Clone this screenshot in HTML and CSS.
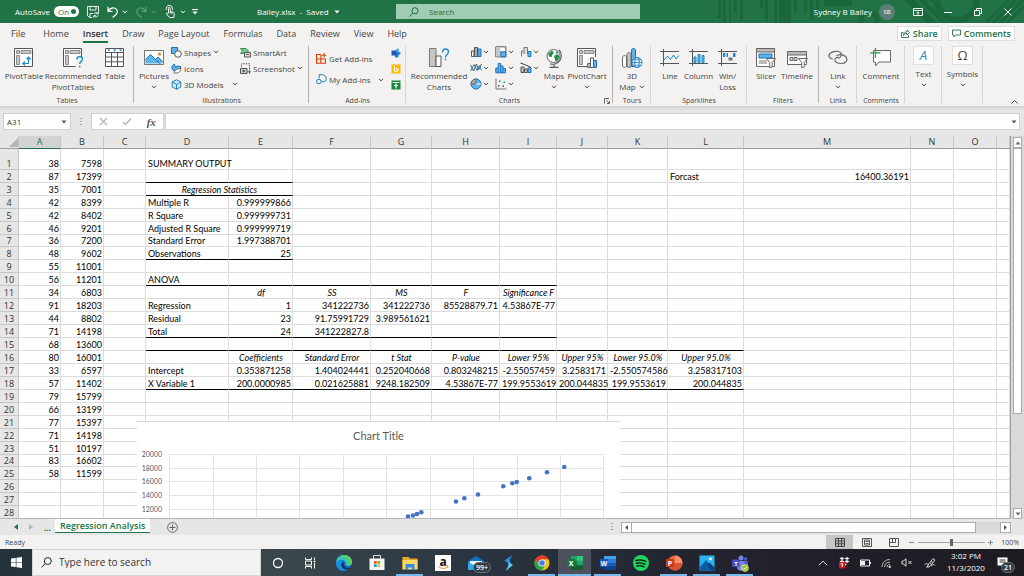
FILE: index.html
```html
<!DOCTYPE html>
<html lang="en">
<head>
<meta charset="utf-8">
<title>Bailey.xlsx - Excel</title>
<link rel="stylesheet" href="styles.css">
</head>
<body>
<svg class="defs" aria-hidden="true">
  <symbol id="chev" viewBox="0 0 6 4"><path d="M1 .8 3 2.9 5 .8" fill="none" stroke="currentColor"/></symbol>
  <symbol id="tri" viewBox="0 0 6 4"><path d="M.5.5h5L3 3.500z" fill="currentColor"/></symbol>
</svg>

<header class="titlebar">
  <svg class="pattern" viewBox="0 0 310 23" aria-hidden="true">
    <g fill="#1b663b">
      <path d="M4 0h3v18H4zM9 0h3v23H9zM15 0h2v23h-2zM20 0h3v13h-3zM26 0h3v21h-3zM46 0h3v8h-3zM51 0h3v21h-3zM60 0h3v23h-3zM65 0h12v23H65zM80 0h3v14h-3zM90 0h3v14h-3zM96 0h3v20h-3zM102 0h3v14h-3zM110 0h28v6h-28zM190 0h10l23 23h-10zM205 0h5l23 23h-5zM216 0h5l23 23h-5z"/>
    </g>
    <g fill="none" stroke="#1b663b"><circle cx="155" cy="20" r="8" stroke-width="5"/><circle cx="243" cy="0" r="20" stroke-width="6"/><path d="m272 23 23-23M279 23l23-23M286 23l23-23M293 23l17-17" stroke-width="3"/></g>
  </svg>
  <div class="quick">
    <label class="autosave">AutoSave <span class="toggle"><input type="checkbox" checked>On</span></label>
    <button aria-label="Save"><svg width="12" height="12" viewBox="0 0 12 12" fill="none" stroke="#fff"><path d="M.5.5h11v5M.5.5v9l2 2H5M3 .5v3.500h6v-3.500M3 11.500v-4h3M7 8a2.400 2.400 0 0 1 4-.5M11.500 5.500v2.200H9.300M11.300 9.300a2.400 2.400 0 0 1-4 .6M6.800 11.800V9.700H9" stroke-width=".9"/></svg></button>
    <button class="undo" aria-label="Undo"><svg width="11" height="12" viewBox="0 0 11 12" fill="none" stroke="#fff" stroke-width="1.200"><path d="M1 .8v4.500h4.500M1.200 5C3 2.500 5 1.800 7 2c4 .8 4 4.800 1.500 7L5.500 11.500"/></svg><svg class="chev"><use href="#chev"/></svg></button>
    <button class="redo" aria-label="Redo"><svg width="11" height="12" viewBox="0 0 11 12" fill="none" stroke="currentColor" stroke-width="1.200"><path d="M10 .8v4.500H5.500M9.800 5C8 2.500 6 1.800 4 2 0 2.800 0 6.800 2.500 9l3 2.500"/></svg><svg class="chev"><use href="#chev"/></svg></button>
    <button class="touch" aria-label="Touch mode"><svg width="10" height="13" viewBox="0 0 10 13" fill="none" stroke="#fff" stroke-width="1"><path d="M3.500 8V3.200a.8.800 0 0 1 1.700 0V6.500l3.300.8c.7.200.9.700.8 1.300L8.800 12.500H4.500L1.500 9c-.3-.8.5-1.200 1-.8zM1.500 5a3.200 3.200 0 1 1 5.800 0M5.200 8.500v-2M7 9V7"/></svg><svg class="chev"><use href="#chev"/></svg></button>
    <button aria-label="Customize toolbar"><svg width="6" height="6" viewBox="0 0 6 6"><path d="M0 .5h6" stroke="#fff"/><path d="M.5 2.500h5L3 5.500z" fill="#fff"/></svg></button>
  </div>
  <div class="doc">Bailey.xlsx&nbsp; - &nbsp;Saved <svg class="tri"><use href="#tri"/></svg></div>
  <label class="search"><svg width="10" height="10" viewBox="0 0 10 10" fill="none" stroke="#1d6a40" stroke-width="1"><circle cx="6" cy="3.800" r="3.100"/><path d="M3.800 6 .5 9.500"/></svg><input type="text" placeholder="Search" aria-label="Search"></label>
  <div class="account">
    <span>Sydney B Bailey</span><span class="avatar">SB</span>
    <button aria-label="Ribbon display options"><svg width="10" height="8" viewBox="0 0 10 8" fill="none" stroke="#fff"><path d="M.5.5h9v7h-9zM.5 2.500h9M5 7V4M3.500 5.300 5 3.800l1.500 1.500" stroke-width=".9"/></svg></button>
    <button aria-label="Minimize"><svg width="8" height="8" viewBox="0 0 8 8"><path d="M0 4.500h8" stroke="#fff"/></svg></button>
    <button aria-label="Restore"><svg width="8" height="8" viewBox="0 0 8 8" fill="none" stroke="#fff"><path d="M.5 2.500h5v5h-5zM2.500 2V.5h5v5H6"/></svg></button>
    <button aria-label="Close"><svg width="8" height="8" viewBox="0 0 8 8"><path d="m.5.5 7 7M7.500.5l-7 7" stroke="#fff"/></svg></button>
  </div>
</header>

<nav class="tabs">
  <button class="file">File</button><button>Home</button><button class="active">Insert</button><button>Draw</button><button>Page Layout</button><button>Formulas</button><button>Data</button><button>Review</button><button>View</button><button>Help</button>
  <div class="share">
    <button><svg width="9" height="9" viewBox="0 0 9 9" fill="none" stroke="#217346" stroke-width=".9"><path d="M2.500 3.500h-2v5h7V6M2.500 6.500c0-2.500 1.500-3.700 3.500-3.700V1l2.500 2.500L6 6V4.300c-1.500 0-2.700.7-3.500 2.200z"/></svg>Share</button>
    <button><svg width="9" height="9" viewBox="0 0 9 9" fill="none" stroke="#217346" stroke-width=".9"><path d="M.5 1h8v5H4L2 8V6H.5z"/></svg>Comments</button>
  </div>
</nav>

<section class="ribbon">
  <div class="group tables">
    <div class="tools">
      <button class="big"><svg width="20" height="20" viewBox="0 0 20 20"><path d="M.5.5h18v18H.5z" fill="#fff" stroke="#555"/><path d="M2.500 2.500h3v3h-3zM7 2.500h10v3H7zM2.500 7.500h3v9h-3z" fill="#c8c6c4" stroke="#777" stroke-width=".8"/><path d="M14.500 15.500v-6M12.500 11.500l2-2.300 2 2.300M15 15.500H9M11 13.500l-2.300 2 2.300 2" fill="none" stroke="#1e8bcd" stroke-width="1.200"/></svg>PivotTable</button>
      <button class="big"><svg width="20" height="20" viewBox="0 0 20 20"><path d="M.5.5h18v18H.5z" fill="#fff" stroke="#555"/><path d="M2.500 2.500h3v3h-3zM7 2.500h10v3H7zM2.500 7.500h3v9h-3z" fill="#c8c6c4" stroke="#777" stroke-width=".8"/><path d="M12.500 9h7.500v11h-7.500z" fill="#f3f2f1"/><path d="M14 11.500c0-4 5.500-3.800 5.500-.5 0 2.500-2.800 2.300-2.800 5M16.700 17.800v1.700" fill="none" stroke="#1e8bcd" stroke-width="1.400"/></svg>Recommended<br>PivotTables</button>
      <button class="big"><svg width="20" height="20" viewBox="0 0 20 20"><path d="M.5.5h18v18H.5z" fill="#fff"/><path d="M.5 4.500h18M.5 9h18M.5 13.800h18M6.500 4v15M12.500 4v15M.5.500h18v18H.5z" fill="none" stroke="#555"/><path d="M1 1h17v3H1z" fill="#fff"/><path d="M2 1.500h3.500L3.700 3.500zM8 1.500h3.500L9.700 3.500zM14 1.500h3.500l-1.800 2z" fill="#1e8bcd"/></svg>Table</button>
    </div>
    <h2>Tables</h2>
  </div>
  <div class="group illus dark">
    <div class="tools">
      <button class="big"><svg width="20" height="20" viewBox="0 0 20 20"><path d="M.5 2.500h19v14H.5z" fill="#fff" stroke="#777"/><path d="M1.500 15.500v-4l5-5 5 5 2.500-2.500 4.500 4.500v2z" fill="#5db3ea"/><path d="m1.500 11.500 5-5 5 5 2.500-2.500 4.500 4.500M10.500 10.500l5 5" fill="none" stroke="#1b70b8"/><circle cx="15.500" cy="6" r="1.600" fill="#e8862a"/></svg>Pictures<svg class="chev"><use href="#chev"/></svg></button>
      <div class="stack">
        <button><svg width="11" height="11" viewBox="0 0 11 11"><path d="M.5.500h6v6h-6z" fill="#5db3ea" stroke="#1b70b8"/><circle cx="7" cy="7" r="3.300" fill="#fff" stroke="#555"/></svg>Shapes<svg class="chev"><use href="#chev"/></svg></button>
        <button><svg width="11" height="11" viewBox="0 0 11 11"><path d="M1 3.500 3 1l1.500 3L7 3l3 1-1.500 3-2 1.500L3 8 1 6z" fill="#5db3ea" stroke="#1b70b8"/><path d="M3 10.500c0-4 4-5 7-5-.2 3-2.500 5-6 4.500" fill="#fff" stroke="#555" stroke-width=".9"/></svg>Icons</button>
        <button><svg width="11" height="11" viewBox="0 0 11 11" fill="#cfe8f8" stroke="#1b80c4"><path d="m5.500.800 4.300 2.200v5L5.500 10.300 1.200 8V3zM1.200 3l4.300 2.300L9.800 3M5.500 5.300v5"/></svg>3D Models<svg class="chev far"><use href="#chev"/></svg></button>
      </div>
      <div class="stack">
        <button><svg width="11" height="11" viewBox="0 0 11 11"><path d="M.5 1.500h5.500L8.500 4 6 6.500H.5L2.500 4z" fill="#79c795" stroke="#27924a"/><path d="M4.500 5.500h6v4.500h-6z" fill="#ddd" stroke="#555"/><path d="M6 7.500h3" stroke="#555"/></svg>SmartArt</button>
        <button><svg width="11" height="11" viewBox="0 0 11 11" fill="none"><path d="M1.500 4V.800h8V6" stroke="#555" stroke-dasharray="1.500 1"/><path d="M.5 5.500h6.500v5H.5z" fill="#ccc" stroke="#555"/><circle cx="3.700" cy="8" r="1.200" fill="#555"/><path d="M9.500 6.500v4.500M7.300 8.800h3.700" stroke="#27924a"/></svg>Screenshot<svg class="chev"><use href="#chev"/></svg></button>
      </div>
    </div>
    <h2>Illustrations</h2>
  </div>
  <div class="group addins">
    <div class="tools">
      <div class="stack roomy">
        <button><svg width="11" height="11" viewBox="0 0 11 11" fill="none" stroke="#d83b01" stroke-width="1.100"><path d="M4.800 1.500H.6v8.800h8.800V6H.6M4.900 1.500v8.800M8 0v4.500M5.800 2.300h4.500"/></svg>Get Add-ins</button>
        <button><svg width="11" height="11" viewBox="0 0 11 11" fill="none" stroke="#1b80c4"><path d="M3.200 4.200V.8L6.500.5l3.500 2v4L7.500 8 5.200 7"/><circle cx="2.800" cy="7.500" r="2.300"/></svg>My Add-ins<svg class="chev far"><use href="#chev"/></svg></button>
      </div>
      <div class="stack minis">
        <button aria-label="Visio"><svg width="10" height="10" viewBox="0 0 10 10"><circle cx="6.500" cy="2" r="1.500" fill="#41a5ee"/><path d="M4 6h3.500v3.500H4z" fill="#2b7cd3"/><path d="M5 3.500h2.500L10 5 7.500 7.500 5 7z" fill="#2b7cd3"/><path d="M.5 2.500h5v5h-5z" fill="#185abd"/></svg></button>
        <button aria-label="Bing"><svg width="10" height="10" viewBox="0 0 10 10"><path d="M.5.500h9v9h-9z" fill="#ffb900"/><path d="M3.500 2v5l1.500.8 2-1.300v-1L4.800 4.300" fill="none" stroke="#fff" stroke-width="1.200"/></svg></button>
        <button aria-label="People graph"><svg width="10" height="10" viewBox="0 0 10 10"><path d="M.5.500h9v9h-9z" fill="#10893e"/><path d="M1.500 2.500h7M5 3.500v5M3 5.500h4" stroke="#fff" stroke-width="1.200"/></svg></button>
      </div>
    </div>
    <h2>Add-ins</h2>
  </div>
  <div class="group charts dark">
    <div class="tools">
      <button class="big"><svg width="20" height="20" viewBox="0 0 20 20"><path d="M.5.500H7v18H.5z" fill="#c8c6c4" stroke="#777"/><path d="M7 8h5v10.500H7z" fill="#fff" stroke="#555"/><path d="M13.500 4.500c0-4.500 6-4.500 6-.8 0 2.800-3 2.800-3 5.800M16.500 10.500v1.800" fill="none" stroke="#1e8bcd" stroke-width="1.400"/></svg>Recommended<br>Charts</button>
      <div class="minigrid">
        <button aria-label="Column chart"><svg width="12" height="12" viewBox="0 0 12 12"><path d="M1.500 5h2.500v5.500H1.500z" fill="#fff" stroke="#555"/><path d="M4.500 1.500h3v9h-3z" fill="#aaa" stroke="#555"/><path d="M8 3h3v7.500H8z" fill="#5db3ea" stroke="#1b70b8"/></svg><svg class="chev"><use href="#chev"/></svg></button>
        <button aria-label="Hierarchy chart"><svg width="12" height="12" viewBox="0 0 12 12"><path d="M.8.800h10v10h-10z" fill="#fff" stroke="#555"/><path d="M1 1h4.500v9.500H1z" fill="#c8c6c4"/><path d="M5.800 5.800h5v5h-5z" fill="#5db3ea" stroke="#1b70b8"/></svg><svg class="chev"><use href="#chev"/></svg></button>
        <button aria-label="Waterfall chart"><svg width="12" height="12" viewBox="0 0 12 12"><path d="M1.500 10.500V5h2M4 8V1.500h3.500V8" fill="#ddd" stroke="#777"/><path d="M8 5.500h3v5H8z" fill="#5db3ea" stroke="#1b80c4"/></svg><svg class="chev"><use href="#chev"/></svg></button>
        <button aria-label="Line chart"><svg width="12" height="12" viewBox="0 0 12 12" fill="none"><path d="m.5 3 3 6 3-7 2 6 3-6" stroke="#555"/><path d="m.5 9 3.500-6.500L7 8.500l2.500-5 2 5" stroke="#1b80c4"/></svg><svg class="chev"><use href="#chev"/></svg></button>
        <button aria-label="Statistic chart"><svg width="12" height="12" viewBox="0 0 12 12"><path d="M.8 10.800V6h2.400V1.500h2.500V4H8v2.500h2.500v4.300z" fill="#5db3ea" stroke="#1b70b8"/><path d="M3.200 6v5M5.700 4v7M8 6.500V11" stroke="#1b70b8" stroke-width=".8"/></svg><svg class="chev"><use href="#chev"/></svg></button>
        <button aria-label="Combo chart"><svg width="12" height="12" viewBox="0 0 12 12"><path d="M1 5h3v5.500H1zM4.500 7h3v3.500h-3z" fill="#bbb" stroke="#555"/><path d="M8 6h3v4.500H8z" fill="#5db3ea" stroke="#1b70b8"/><path d="m.5 1 4 1.500L11 5.500" fill="none" stroke="#333"/></svg><svg class="chev"><use href="#chev"/></svg></button>
        <button aria-label="Pie chart"><svg width="12" height="12" viewBox="0 0 12 12"><circle cx="6" cy="6" r="5" fill="#5db3ea" stroke="#1b70b8"/><path d="M6 6V1a5 5 0 0 0-5 5z" fill="#aaa" stroke="#666"/><path d="M6 6h5" stroke="#fff"/></svg><svg class="chev"><use href="#chev"/></svg></button>
        <button aria-label="Scatter chart"><svg width="12" height="12" viewBox="0 0 12 12"><path d="M1 .5v10.500h10.500" fill="none" stroke="#777"/><path d="M3 7h1.500v1.500H3zM7.500 7.500H9V9H7.500z" fill="#555"/><path d="M4 2.500h1.500V4H4zM8.500 3.500H10V5H8.500z" fill="#1b80c4"/></svg><svg class="chev"><use href="#chev"/></svg></button>
      </div>
      <button class="big"><svg width="18" height="20" viewBox="0 0 18 20"><circle cx="8.500" cy="8" r="6.500" fill="#fff" stroke="#666"/><path d="M3 5.500 7 2.500l2 2L7 7v2L4 8.500zM9 8l3.500-2 2 2.500-1.500 3.500-2.500 1.500zM11 3.500l2 .5v1.500h-2z" fill="#2c8c4d"/><path d="M14 2a8.500 8.500 0 0 1-9 13.800M9 17v2M4.500 19.300h9" fill="none" stroke="#555" stroke-width="1.200"/></svg>Maps<svg class="chev"><use href="#chev"/></svg></button>
      <button class="big"><svg width="20" height="20" viewBox="0 0 20 20"><path d="M.5.500h18v18H.5z" fill="#fff" stroke="#555"/><path d="M2.500 2.500h3v3h-3zM7 2.500h10v3H7zM2.500 7.500h3v9h-3z" fill="#c8c6c4" stroke="#777" stroke-width=".8"/><path d="M10 9h10v11H10z" fill="#f3f2f1"/><path d="M10.500 15.500h3v4h-3z" fill="#bbb" stroke="#666"/><path d="M13.500 10h3v9.500h-3z" fill="#fff" stroke="#555"/><path d="M16.500 12.500h3v7h-3z" fill="#5db3ea" stroke="#1b70b8"/></svg>PivotChart<svg class="chev"><use href="#chev"/></svg></button>
    </div>
    <h2>Charts</h2>
    <button class="launcher" aria-label="See all charts"><svg width="6" height="6" viewBox="0 0 6 6" fill="none" stroke="#666"><path d="M.5 5.500v-5H5M2.500 2.500l3 3M5.500 3v2.500H3"/></svg></button>
  </div>
  <div class="group one">
    <div class="tools"><button class="big"><svg width="22" height="20" viewBox="0 0 22 20"><path d="M1.500 9.500c0-2.500 4-2.500 4 0v9c-1 1-3 1-4 0z" fill="#fff" stroke="#666"/><path d="M6 6.500c0-2.500 4-2.500 4 0v12c-1 1-3 1-4 0z" fill="#c8c6c4" stroke="#666"/><path d="M10.500 2c0-2 4-2 4 0v16.500h-4z" fill="#5db3ea" stroke="#1b70b8"/><circle cx="16" cy="14.500" r="5" fill="#fff" stroke="#1b80c4"/><ellipse cx="16" cy="14.500" rx="2.200" ry="5" fill="none" stroke="#1b80c4"/><path d="M11 14.500h10M12 11.800h8M12 17.200h8" stroke="#1b80c4" stroke-width=".8"/></svg>3D<br><span>Map <svg class="chev"><use href="#chev"/></svg></span></button></div>
    <h2>Tours</h2>
  </div>
  <div class="group spark">
    <div class="tools">
      <button class="big"><svg width="20" height="20" viewBox="0 0 20 20" fill="none"><path d="M0 3.500h19M0 15.500h19M3.500 1v17" stroke="#555"/><path d="m4 12 3.500-4 3 3.500 3-4.500 2.500 4 3-3.500" stroke="#1e8bcd"/></svg>Line</button>
      <button class="big"><svg width="20" height="20" viewBox="0 0 20 20" fill="none"><path d="M0 3.500h19M0 15.500h19M3.500 1v17" stroke="#555"/><path d="M5 9h2v5.500H5zM9 6.500h2v8H9zM13 7.500h2v7h-2z" fill="#5db3ea" stroke="#1e8bcd"/></svg>Column</button>
      <button class="big"><svg width="20" height="20" viewBox="0 0 20 20" fill="none"><path d="M0 3.500h19M0 15.500h19M3.500 1v17" stroke="#555"/><path d="M5 5h2.200v4H5zM8.500 5h1.500v4H8.500zM15 5h2.500v4H15z" fill="#1e8bcd"/><path d="M10.500 9.500h4v3h-4z" fill="#777"/></svg>Win/<br>Loss</button>
    </div>
    <h2>Sparklines</h2>
  </div>
  <div class="group filters dark">
    <div class="tools">
      <button class="big"><svg width="20" height="20" viewBox="0 0 20 20"><path d="M.5.500h18v18H.5z" fill="#fff" stroke="#666"/><path d="M.5.500h18V4H.5z" fill="#bbb" stroke="#666"/><path d="M3 6h13v4H3z" fill="#5db3ea" stroke="#1b70b8"/><path d="M3 12h8v4H3z" fill="#bbb"/><path d="M10.500 10.500h9l-3.300 4V19l-2.500 1v-5.500z" fill="#fff" stroke="#666"/></svg>Slicer</button>
      <button class="big"><svg width="21" height="20" viewBox="0 0 21 20"><path d="M.5 3.500h19v13H.5z" fill="#fff" stroke="#666"/><path d="M.5 3.500h19V7H.5z" fill="#bbb" stroke="#666"/><path d="M3 9.500h3v3H3zM7 9.500h3v3H7z" fill="#ddd" stroke="#666"/><path d="M11.500 10.500h9l-3.300 4V19l-2.500 1v-5.500z" fill="#fff" stroke="#666"/></svg>Timeline</button>
    </div>
    <h2>Filters</h2>
  </div>
  <div class="group one">
    <div class="tools"><button class="big"><svg width="20" height="20" viewBox="0 0 20 20" fill="none" stroke="#666" stroke-width="1.200"><path d="M5 11C1 11 0 7.500 2 5.500c2-2.500 8-3 10.500-1 2 2 .5 5-2.500 6M8.500 8c2-2 7-2 9.500 1 2.500 4-1 6.500-5 6.500-3.500 0-6.500-1.500-6-4 .3-1.700 2-2.500 3.500-2"/></svg>Link<svg class="chev"><use href="#chev"/></svg></button></div>
    <h2>Links</h2>
  </div>
  <div class="group one">
    <div class="tools"><button class="big"><svg width="22" height="20" viewBox="0 0 22 20"><path d="M3.500 2.500h17v11.500H9L5.500 18v-4h-2z" fill="#fff" stroke="#666"/><path d="M5.500 0v10M0 4.800h10.500" stroke="#27a04f" stroke-width="1.200"/></svg>Comment</button></div>
    <h2>Comments</h2>
  </div>
  <div class="group one">
    <div class="tools"><button class="big"><span class="tile textart">A</span>Text<svg class="chev"><use href="#chev"/></svg></button></div>
  </div>
  <div class="group one">
    <div class="tools"><button class="big"><span class="tile">Ω</span>Symbols<svg class="chev"><use href="#chev"/></svg></button></div>
  </div>
  <div class="collapse"><button aria-label="Collapse the ribbon"><svg width="7" height="4" viewBox="0 0 7 4"><path d="m.5 3.500 3-3 3 3" fill="none" stroke="#444"/></svg></button></div>
</section>

<section class="formulabar">
  <label class="namebox"><input type="text" value="A31" aria-label="Name box"><svg class="tri"><use href="#tri"/></svg></label>
  <span class="grip"></span>
  <div class="fxbox">
    <button aria-label="Cancel"><svg width="9" height="9" viewBox="0 0 9 9"><path d="m1 1 7 7M8 1 1 8" stroke="#b5b5b5" stroke-width="1.200"/></svg></button>
    <button aria-label="Enter"><svg width="10" height="9" viewBox="0 0 10 9"><path d="m1 5 2.500 2.500L9 1.500" fill="none" stroke="#b5b5b5" stroke-width="1.500"/></svg></button>
    <button class="fx" aria-label="Insert function">fx</button>
  </div>
  <label class="formula"><input type="text" aria-label="Formula"><svg class="tri"><use href="#tri"/></svg></label>
</section>

<main class="workspace">
  <div class="sheet">
    <table class="grid">
      <colgroup><col class="w-head"><col class="w-n"><col class="w-b"><col class="w-n"><col class="w-d"><col class="w-e"><col class="w-f"><col class="w-g"><col class="w-h"><col class="w-i"><col class="w-j"><col class="w-k"><col class="w-l"><col><col class="w-b"><col class="w-b"><col class="w-p"></colgroup>
      <thead><tr><th class="corner"><svg width="9" height="9" viewBox="0 0 9 9"><path d="M9 0v9H0z" fill="#b4b4b4"/></svg><th class="sel">A<th>B<th>C<th>D<th>E<th>F<th>G<th>H<th>I<th>J<th>K<th>L<th>M<th>N<th>O<th></tr></thead>
      <tbody>
      <tr class="tall"><th>1<td>38<td>7598<td><td class="t">SUMMARY OUTPUT
        <td><td><td><td><td><td> <td><td><td><td><td><td></tr>
      <tr class="rule-e"><th>2<td>87<td>17399<td><td><td>
        <td><td><td><td><td><td> <td class="t">Forcast<td>16400.36191<td><td><td></tr>
      <tr><th>3<td>35<td>7001<td><td class="h ruled" colspan="2">Regression Statistics
        <td><td><td><td><td> <td><td><td><td><td><td></tr>
      <tr><th>4<td>42<td>8399<td><td class="t">Multiple R<td>0.999999866
        <td><td><td><td><td> <td><td><td><td><td><td></tr>
      <tr><th>5<td>42<td>8402<td><td class="t">R Square<td>0.999999731
        <td><td><td><td><td> <td><td><td><td><td><td></tr>
      <tr><th>6<td>46<td>9201<td><td class="t">Adjusted R Square<td>0.999999719
        <td><td><td><td><td> <td><td><td><td><td><td></tr>
      <tr class="short"><th>7<td>36<td>7200<td><td class="t">Standard Error<td>1.997388701
        <td><td><td><td><td> <td><td><td><td><td><td></tr>
      <tr class="rule-e"><th>8<td>48<td>9602<td><td class="t">Observations<td>25
        <td><td><td><td><td> <td><td><td><td><td><td></tr>
      <tr><th>9<td>55<td>11001<td><td>
        <td><td><td><td><td><td> <td><td><td><td><td><td></tr>
      <tr class="rule-i"><th>10<td>56<td>11201<td><td class="t">ANOVA
        <td><td><td><td><td><td> <td><td><td><td><td><td></tr>
      <tr><th>11<td>34<td>6803<td><td><td class="h">df<td class="h">SS<td class="h">MS<td class="h">F<td class="h">Significance F
        <td><td><td><td><td><td><td></tr>
      <tr><th>12<td>91<td>18203<td><td class="t">Regression<td>1<td>341222736<td>341222736<td>85528879.71<td>4.53867E-77
        <td><td><td><td><td><td><td></tr>
      <tr><th>13<td>44<td>8802<td><td class="t">Residual<td>23<td>91.75991729<td>3.989561621<td><td>
        <td><td><td><td><td><td><td></tr>
      <tr class="rule-i"><th>14<td>71<td>14198<td><td class="t">Total<td>24<td>341222827.8<td><td><td>
        <td><td><td><td><td><td><td></tr>
      <tr class="rule-l"><th>15<td>68<td>13600<td><td>
        <td><td><td><td><td><td> <td><td><td><td><td><td></tr>
      <tr><th>16<td>80<td>16001<td><td><td class="h">Coefficients<td class="h">Standard Error<td class="h">t Stat<td class="h">P-value<td class="h">Lower 95%<td class="h">Upper 95%<td class="h">Lower 95.0%<td class="h">Upper 95.0%
        <td><td><td><td></tr>
      <tr><th>17<td>33<td>6597<td><td class="t">Intercept<td>0.353871258<td>1.404024441<td>0.252040668<td>0.803248215<td>-2.55057459<td>3.2583171<td>-2.550574586<td>3.258317103
        <td><td><td><td></tr>
      <tr class="rule-l"><th>18<td>57<td>11402<td><td class="t">X Variable 1<td>200.0000985<td>0.021625881<td>9248.182509<td>4.53867E-77<td>199.9553619<td>200.044835<td>199.9553619<td>200.044835
        <td><td><td><td></tr>
      <tr><th>19<td>79<td>15799<td><td>
        <td><td><td><td><td><td> <td><td><td><td><td><td></tr>
      <tr><th>20<td>66<td>13199<td><td>
        <td><td><td><td><td><td> <td><td><td><td><td><td></tr>
      <tr><th>21<td>77<td>15397<td><td>
        <td><td><td><td><td><td> <td><td><td><td><td><td></tr>
      <tr><th>22<td>71<td>14198<td><td>
        <td><td><td><td><td><td> <td><td><td><td><td><td></tr>
      <tr><th>23<td>51<td>10197<td><td>
        <td><td><td><td><td><td> <td><td><td><td><td><td></tr>
      <tr class="short"><th>24<td>83<td>16602<td><td>
        <td><td><td><td><td><td> <td><td><td><td><td><td></tr>
      <tr><th>25<td>58<td>11599<td><td>
        <td><td><td><td><td><td> <td><td><td><td><td><td></tr>
      <tr><th>26<td><td><td><td>
        <td><td><td><td><td><td> <td><td><td><td><td><td></tr>
      <tr><th>27<td><td><td><td>
        <td><td><td><td><td><td> <td><td><td><td><td><td></tr>
      <tr><th>28<td><td><td><td>
        <td><td><td><td><td><td> <td><td><td><td><td><td></tr>
      </tbody>
    </table>
    <figure class="chart">
      <figcaption>Chart Title</figcaption>
      <svg width="483" height="68" viewBox="0 0 483 68">
        <path d="M32 4.500h435M32 18.500h435M32 31.500h435M32 45.500h435M32 59.500h435M32.500 4v64M76.500 4v64M119.500 4v64M162.500 4v64M206.500 4v64M249.500 4v64M293.500 4v64M336.500 4v64M380.500 4v64M423.500 4v64M466.500 4v64" stroke="#e4e4e4"/>
        <g class="axis"><text x="25" y="7">20000</text><text x="25" y="21">18000</text><text x="25" y="34">16000</text><text x="25" y="48">14000</text><text x="25" y="62">12000</text></g>
        <g fill="#4472c4"><circle cx="271" cy="66.500" r="2.300"/><circle cx="276" cy="65.500" r="2.300"/><circle cx="280" cy="64" r="2.300"/><circle cx="284.300" cy="62.300" r="2.300"/><circle cx="319" cy="51.500" r="2.300"/><circle cx="327.300" cy="48.300" r="2.300"/><circle cx="341" cy="44.500" r="2.300"/><circle cx="366.300" cy="36.300" r="2.300"/><circle cx="375.300" cy="33.300" r="2.300"/><circle cx="379.700" cy="32" r="2.300"/><circle cx="392.300" cy="28.300" r="2.300"/><circle cx="410" cy="22.300" r="2.300"/><circle cx="427.300" cy="17" r="2.300"/></g>
      </svg>
    </figure>
  </div>
  <div class="vscroll">
    <button aria-label="Scroll up"><svg class="tri up"><use href="#tri"/></svg></button>
    <div class="thumb"></div>
    <button class="down" aria-label="Scroll down"><svg class="tri"><use href="#tri"/></svg></button>
  </div>
</main>

<div class="sheetbar">
  <div class="sheetnav"><button aria-label="Previous sheet"><svg width="4" height="6" viewBox="0 0 4 6"><path d="M4 0v6L0 3z" fill="#217346"/></svg></button><button aria-label="Next sheet"><svg width="4" height="6" viewBox="0 0 4 6"><path d="M0 0v6l4-3z" fill="#b5b5b5"/></svg></button><button class="more">...</button></div>
  <button class="sheettab">Regression Analysis</button>
  <button class="add" aria-label="New sheet"><svg width="11" height="11" viewBox="0 0 11 11" fill="none" stroke="#666"><circle cx="5.500" cy="5.500" r="4.900"/><path d="M5.500 2.500v6M2.500 5.500h6"/></svg></button>
  <span class="grip"></span>
  <div class="hscroll">
    <button aria-label="Scroll left"><svg width="3" height="5" viewBox="0 0 3 5"><path d="M3 0v5L0 2.500z" fill="#555"/></svg></button>
    <div class="thumb"></div>
    <button class="right" aria-label="Scroll right"><svg width="3" height="5" viewBox="0 0 3 5"><path d="M0 0v5l3-2.500z" fill="#555"/></svg></button>
  </div>
</div>

<div class="status">
  <span class="ready">Ready</span>
  <button class="view on" aria-label="Normal view"><svg width="10" height="9" viewBox="0 0 10 9" fill="none" stroke="#444"><path d="M.5.500h9v8h-9zM.5 3h9M.5 5.800h9M3.500.500v8M6.500.500v8"/></svg></button>
  <button class="view" aria-label="Page layout view"><svg width="10" height="9" viewBox="0 0 10 9" fill="none" stroke="#555"><path d="M.5.500h9v8h-9zM2.500 2h5v5h-5zM3.500 3.500h3M3.500 5.500h3"/></svg></button>
  <button class="view" aria-label="Page break view"><svg width="10" height="9" viewBox="0 0 10 9" fill="none" stroke="#555"><path d="M.5.500h9v8h-9zM.5 4.500h6v-4M3.500.500v4"/></svg></button>
  <button class="zoombtn" aria-label="Zoom out"><svg width="5" height="5" viewBox="0 0 5 5"><path d="M0 2.500h5" stroke="#888"/></svg></button>
  <input class="zoom" type="range" min="0" max="100" value="50" aria-label="Zoom">
  <button class="zoombtn" aria-label="Zoom in"><svg width="5" height="5" viewBox="0 0 5 5"><path d="M0 2.500h5M2.500 0v5" stroke="#888"/></svg></button>
  <span class="percent">100%</span>
</div>

<footer class="taskbar">
  <button class="start" aria-label="Start"><svg width="11" height="11" viewBox="0 0 11 11" fill="#fff"><path d="M0 1.500 4.800.900V5.200H0zM5.400.800 11 0v5.200H5.400zM0 5.800h4.800v4.300L0 9.500zM5.400 5.800H11V11l-5.600-.8z"/></svg></button>
  <label class="winsearch"><svg width="11" height="11" viewBox="0 0 11 11" fill="none" stroke="#222"><circle cx="6.800" cy="4" r="3.500"/><path d="M4.300 6.500.5 10.500"/></svg><input type="text" placeholder="Type here to search" aria-label="Type here to search"></label>
  <div class="apps">
    <button aria-label="Cortana"><svg width="16" height="16" viewBox="0 0 16 16"><circle cx="8" cy="8" r="4.500" fill="none" stroke="#fff" stroke-width="1.300"/></svg></button>
    <button aria-label="Task view"><svg width="16" height="16" viewBox="0 0 16 16" fill="none" stroke="#fff"><path d="M2.500 2.500v2h6v-2M2.500 13.500v-2h6v2M2.500 6h6v4h-6zM11.500 2.500v3M11.500 7.500v6"/><path d="M10.500 6.500h2"/></svg></button>
    <button aria-label="Edge"><svg width="18" height="18" viewBox="0 0 18 18"><circle cx="9" cy="9" r="8" fill="#0c67c0"/><path d="M1 9C1.500 3 5 1 9 1c5 0 8 3.500 8 7 0 2.500-2 3.800-4 3.800s-3-.8-2.500-1.800C11 6 4 4 1 9z" fill="#35c1c0"/><path d="M9 1c5 0 8 3.500 8 7 0 2.500-2 3.800-4 3.800 0-3 .5-7-5-8.500C4 2.500 6 1 9 1z" fill="#55d064"/><path d="M7 7.500c-2.500 3 0 8 5.500 8 2 0 3.500-1 4-1.800-2.500 1-8 .5-8-4 0-.8-.5-1.500-1.500-2.200z" fill="#1b2e4a"/><path d="M1 9c2-3 5.500-3 7-1-2.500.8-3 6 3 8.800C5 18 1 14 1 9z" fill="#1592e5"/></svg></button>
    <button aria-label="Store"><svg width="18" height="18" viewBox="0 0 18 18"><path d="M5.500 5V1.500h7V5" fill="none" stroke="#ddd"/><path d="M1.500 4.500h15V16h-15z" fill="#f5f5f5"/><path d="M6 7h2.700v2.700H6z" fill="#f25022"/><path d="M9.300 7H12v2.700H9.300z" fill="#7fba00"/><path d="M6 10.300h2.700V13H6z" fill="#00a4ef"/><path d="M9.300 10.300H12V13H9.300z" fill="#ffb900"/></svg></button>
    <button class="run" aria-label="File Explorer"><svg width="18" height="18" viewBox="0 0 18 18"><path d="M1.500 3h6L9 4.500h7.500V15h-15z" fill="#e9a825"/><path d="M1.500 6h15v9.500h-15z" fill="#ffd666"/><path d="M4.500 10h9v6h-2.500v-2.500H7V16H4.500z" fill="#2f8ddb"/></svg></button>
    <button aria-label="Amazon"><svg width="18" height="18" viewBox="0 0 18 18"><path d="M1 1h16v16H1z" fill="#fff"/><text class="logo" x="9" y="11.500" font-size="12" fill="#111">a</text><path d="M4.500 12.500c2.500 2.500 7 2.500 9.300.3M12 12l2-.2-.2 2" fill="none" stroke="#e58a1f"/></svg></button>
    <button class="badged" aria-label="Mail"><svg width="18" height="18" viewBox="0 0 18 18"><path d="M1 7 9 2l8 5v9H1z" fill="#1074c4"/><path d="M3 7h12v6H3z" fill="#fff"/><path d="m1 8 8 4 8-4v8H1z" fill="#35a9e8"/></svg><span class="count">99+</span></button>
    <button aria-label="Stream app"><svg width="18" height="18" viewBox="0 0 18 18"><path d="M12.500 1 4.500 6.500 9 10l1.500-2.500L9.500 6z" fill="#2493e6"/><path d="m9 8 4 3-7.500 6 2.500-4.500z" fill="#5cc9f5"/></svg></button>
    <button class="run" aria-label="Chrome"><svg width="18" height="18" viewBox="0 0 18 18"><circle cx="9" cy="9" r="7.500" fill="#fbc116"/><path d="M2.500 5.200A7.500 7.500 0 0 1 15.500 5.200H9L5.800 11z" fill="#e33b2e"/><path d="M2.500 5.200A7.500 7.500 0 0 0 9 16.500L12.200 11H5.800z" fill="#2ba24c"/><circle cx="9" cy="9" r="3.600" fill="#fff"/><circle cx="9" cy="9" r="2.800" fill="#3f7fe8"/></svg></button>
    <button class="run current" aria-label="Excel"><svg width="18" height="18" viewBox="0 0 18 18"><path d="M5 2h12v14H5z" fill="#21a366"/><path d="M11 2h6v4.700h-6z" fill="#33c481"/><path d="M5 6.700h6v4.600H5z" fill="#107c41"/><path d="M11 11.300h6V16H5v-4.700z" fill="#185c37"/><path d="M1 5h8v8H1z" fill="#107c41"/><text class="logo" x="5" y="11.500" font-size="7" fill="#fff">X</text></svg></button>
    <button class="run" aria-label="Word"><svg width="18" height="18" viewBox="0 0 18 18"><path d="M5 2h12v3.700H5z" fill="#41a5ee"/><path d="M5 5.500h12V9H5z" fill="#2b7cd3"/><path d="M5 9h12v3.500H5z" fill="#185abd"/><path d="M5 12.300h12V16H5z" fill="#103f91"/><path d="M1 5h8v8H1z" fill="#185abd"/><text class="logo" x="5" y="11.500" font-size="7" fill="#fff">W</text></svg></button>
    <button aria-label="Spotify"><svg width="18" height="18" viewBox="0 0 18 18"><circle cx="9" cy="9" r="8" fill="#1ed760"/><path d="M4 6.500c3.500-1 7-.7 10 1M4.500 9.300c3-.8 6-.5 8.700 1M5 12c2.500-.7 5-.4 7 .8" fill="none" stroke="#111" stroke-width="1.400" stroke-linecap="round"/></svg></button>
    <button class="run" aria-label="PowerPoint"><svg width="18" height="18" viewBox="0 0 18 18"><circle cx="10" cy="9" r="7.500" fill="#ed6c47"/><path d="M10 1.500A7.500 7.500 0 0 1 17.500 9H10z" fill="#ff8f6b"/><path d="M2.500 9h15a7.500 7.500 0 0 1-15 0z" fill="#d35230"/><path d="M1 5h8v8H1z" fill="#c43e1c"/><text class="logo" x="5" y="11.500" font-size="7" fill="#fff">P</text></svg></button>
    <button class="run" aria-label="Photos"><svg width="18" height="18" viewBox="0 0 18 18"><path d="M1.500 1.500h15v15h-15z" fill="#2bb3f3"/><path d="M1.500 13.500 8 6l8.500 10.500h-15z" fill="#0b5cab"/><path d="m9 11 2.500-2.500 5 5v3h-3z" fill="#0a3f7c"/><circle cx="12.500" cy="5" r="1.400" fill="#fff"/></svg></button>
    <button class="run" aria-label="Teams"><svg width="18" height="18" viewBox="0 0 18 18"><circle cx="10" cy="4" r="2.500" fill="#7b83eb"/><circle cx="14.500" cy="5" r="1.800" fill="#5059c9"/><path d="M12 7h5v5c0 2-1.500 3-3 3z" fill="#5059c9"/><path d="M6 7h7.500v6c0 5-7.500 5-7.500 0z" fill="#7b83eb"/><path d="M1 5.500h7.500V13H1z" fill="#464eb8"/><text class="logo" x="5" y="11.500" font-size="6" fill="#fff">T</text><circle cx="14" cy="14" r="3.400" fill="#8ec31e" stroke="#fff" stroke-width=".6"/><path d="m12.500 14 1.200 1.200 2-2.300" fill="none" stroke="#fff"/></svg></button>
  </div>
  <div class="tray">
    <button aria-label="Hidden icons"><svg width="10" height="6" viewBox="0 0 10 6"><path d="m.8 5.200 4.200-4 4.200 4" fill="none" stroke="#ddd"/></svg></button>
    <button aria-label="Dropbox"><svg width="12" height="12" viewBox="0 0 12 12"><path d="m4 0 2.500 1.500L4 3 1.500 1.500zM9 0l2.500 1.500L9 3 6.500 1.500zM4 3l2.500 1.500L4 6 1.500 4.500zM9 3l2.500 1.500L9 6 6.500 4.500zM6.500 6 9 7.500 6.500 9 4 7.500z" fill="#eee"/><path d="M1 5h6v6.500H1z" fill="#d0152a"/><text class="logo" x="4" y="10.300" font-size="6" fill="#fff">1</text></svg></button>
    <button aria-label="Battery"><svg width="12" height="8" viewBox="0 0 12 8"><path d="M1.500 1h9v6h-9z" fill="none" stroke="#eee"/><path d="M2 2h4v4H2zM11 3h1v2h-1z" fill="#eee"/></svg></button>
    <button aria-label="Network"><svg width="10" height="10" viewBox="0 0 10 10" fill="none" stroke="#bbb"><path d="M1 9c0-4 3-7.500 8-7.500M3.500 9c0-3 2.500-5 5.500-5M6 9c0-1.500 1-2.700 3-2.700"/><path d="M8 8h1.500v1.500H8z" fill="#fff"/></svg></button>
    <button aria-label="Volume muted"><svg width="12" height="9" viewBox="0 0 12 9" fill="none" stroke="#ddd"><path d="M1 3h1.500L5 .800v7.400L2.500 6H1zM7.500 3l3 3M10.500 3l-3 3"/></svg></button>
    <button class="pen" aria-label="Pen"><svg width="12" height="12" viewBox="0 0 12 12" fill="none" stroke="#ccc"><path d="M1 8c0-2 3-2 3 0s-1.500 2.500-2 2M4 8l5-6.500 2 1.500-5 6.500-2.500.8zM5.500 6l2 1.500M7 4l2 1.500M7 9c1.500-1.500 3.500-2 4-.5"/></svg></button>
    <time class="clock">3:02 PM<br>11/3/2020</time>
    <button class="badged" aria-label="Notifications"><svg width="12" height="12" viewBox="0 0 12 12"><path d="M.5.500h10v8h-3L5.500 11V8.500h-5z" fill="#fff"/><path d="M2.500 3h6M2.500 5h6" stroke="#333"/></svg><span class="count">21</span></button>
  </div>
</footer>
</body>
</html>
```

FILE: styles.css
```css
* { box-sizing: border-box; }
html, body { height: 100%; }
body {
  margin: 0;
  display: flex;
  flex-direction: column;
  overflow: hidden;
  background: #e6e6e6;
  color: #444;
  font: 8px/11px "Open Sans", "Noto Sans", sans-serif;
}
button, input { font: inherit; color: inherit; border: 0; margin: 0; padding: 0; background: none; }
button { display: inline-flex; align-items: center; justify-content: center; white-space: nowrap; }
input { min-width: 0; outline: 0; }
svg { display: block; flex: none; }
h2 { margin: 0; font: inherit; }
.defs { position: absolute; width: 0; height: 0; }
.chev, .tri { width: 6px; height: 4px; }
.up { transform: rotate(180deg); }

/* Title bar */
.titlebar {
  position: relative;
  flex: none;
  height: 23px;
  display: grid;
  grid-template-columns: 257px 139px minmax(100px, 244px) 1fr;
  align-items: center;
  background: #217346;
  color: #fff;
}
.pattern { position: absolute; right: 0; top: 0; width: 310px; height: 23px; }
.quick { display: flex; align-items: center; padding-left: 15px; gap: 8px; }
.quick button { gap: 4px; }
.quick button:last-child { margin-left: 2px; transform: none; }
.autosave { display: flex; align-items: center; gap: 4px; }
.toggle { display: flex; align-items: center; justify-content: space-between; flex-direction: row-reverse; width: 25px; height: 11px; padding: 0 3px 0 4px; border-radius: 6px; background: #fff; color: #217346; }
.toggle input { appearance: none; width: 5px; height: 5px; border-radius: 50%; background: #217346; }
.quick > button:nth-of-type(-n+2) svg { flex: none; }
.quick .redo { color: #5d9a77; }
.quick .touch { gap: 5px; }
.quick .autosave + button { margin-left: 0; }
.quick button:last-child { margin-left: -2px; }
.doc { display: flex; align-items: center; gap: 5px; }
.search { position: relative; display: flex; align-items: center; gap: 10px; height: 15px; padding-left: 13px; background: #9fcdb3; color: #1d6a40; }
.search input { flex: 1; }
.search input::placeholder { color: #1d6a40; opacity: 1; }
.account { position: relative; display: flex; align-items: center; justify-content: flex-end; padding-right: 1px; }
.account button { width: 30px; height: 23px; }
.avatar { width: 16px; height: 16px; margin: 0 8px 0 7px; border-radius: 50%; background: #5b7f78; font-size: 6px; line-height: 16px; text-align: center; }

/* Ribbon tabs */
.tabs { flex: none; display: flex; align-items: center; gap: 14px; height: 21px; padding: 0 9px 0 11px; background: #f3f2f1; font-size: 9px; }
.tabs > button { height: 19px; border-bottom: 2px solid transparent; border-top: 2px solid transparent; }
.tabs > .file { margin-right: 4px; }
.tabs > .active { border-bottom-color: #217346; font-weight: 600; color: #333; }
.share { display: flex; gap: 6px; margin-left: auto; }
.share button { height: 15px; padding: 0 3px; gap: 3px; border: 1px solid #e1dfdd; background: #fff; color: #217346; font-weight: 600; }

/* Ribbon */
.ribbon {
  flex: none;
  display: grid;
  grid-template-columns: 134px 175px 97px 207px 38px 96px 72px 38px 48px 37px 41px 1fr;
  height: 63px;
  background: #f3f2f1;
  border-bottom: 1px solid #d0cfce;
}
.group { position: relative; display: flex; flex-direction: column; justify-content: space-between; background: linear-gradient(#d8d6d4, #d8d6d4) right 2px / 1px 57px no-repeat; }
.group.dark, .group.tables { background-image: linear-gradient(#b3b1af, #b3b1af); }
.group h2 { text-align: center; font-size: 7px; line-height: 11px; }
.tools { display: grid; align-items: start; }
.big { flex-direction: column; padding-top: 4px; line-height: 11px; color: #444; }
.big > svg:first-child { margin-bottom: 2px; }
.big > .chev { margin-top: 4px; }
.big span { display: inline-flex; align-items: center; gap: 3px; }
.stack { display: flex; flex-direction: column; align-items: flex-start; }
.stack button { height: 16px; gap: 2px; }
.stack .far { margin-left: 6px; }
.tables .tools { grid-template-columns: 42px 56px 28px; padding-left: 3px; }
.illus .tools { grid-template-columns: 34px 69px auto; padding-left: 3px; }
.addins .tools { grid-template-columns: 72px 15px; padding-left: 7px; }
.roomy { padding-top: 4px; }
.roomy button { height: 21px; }
.minis { align-items: center; padding-top: 1px; }
.charts .tools { grid-template-columns: 56px 75px 24px 42px; padding-left: 5px; }
.minigrid { display: grid; grid-template-columns: repeat(3, 25px); }
.minigrid button { height: 16px; gap: 1px; }
.launcher { position: absolute; right: 3px; bottom: 2px; }
.one .tools { grid-template-columns: 1fr; }
.spark .tools { grid-template-columns: 28px 29px 29px; padding-left: 5px; }
.filters .tools { grid-template-columns: 28px 34px; padding-left: 5px; }
.tile { width: 21px; height: 19px; margin: -2px 0 3px; justify-content: center; border: 1px solid #e1dfdd; background: #fff; font-size: 13px; }
.textart { color: #1e8bcd; font-style: italic; }
.collapse { display: flex; align-items: flex-end; justify-content: flex-end; padding: 0 6px 2px; }

/* Formula bar */
.formulabar { flex: none; display: flex; align-items: center; height: 29px; padding: 0 4px 0 3px; background: linear-gradient(#d6d6d6, #e6e6e6 4px); }
.namebox, .fxbox, .formula { display: flex; align-items: center; height: 17px; border: 1px solid #cfcfcf; background: #fff; color: #555; }
.namebox { width: 68px; padding: 0 3px; }
.namebox input, .formula input { flex: 1; color: #333; }
.grip { width: 2px; height: 8px; background: repeating-linear-gradient(#a5a5a5 0 1px, transparent 1px 3px); }
.formulabar .grip { margin: 0 9px; }
.fxbox { width: 73px; justify-content: space-around; }
.fx { font: italic 700 11px/12px "Liberation Serif", serif; }
.formula { flex: 1; margin-left: 1px; padding: 0 2px; }

/* Worksheet */
.workspace { flex: 1; min-height: 0; display: flex; }
.sheet { position: relative; flex: 1; min-width: 0; overflow: hidden; border-right: 1px solid #9d9d9d; border-bottom: 1px solid #b5b5b5; background: #fff; }
.grid { width: 100%; table-layout: fixed; border-collapse: separate; border-spacing: 0; font: 9px/11px Lato, "Liberation Sans", sans-serif; color: #000; }
.w-head { width: 19px; }
.w-n { width: 42px; }
.w-b { width: 43px; }
.w-d { width: 83px; }
.w-e { width: 64px; }
.w-f { width: 78px; }
.w-g { width: 61px; }
.w-h { width: 68px; }
.w-i { width: 57px; }
.w-j { width: 51px; }
.w-k { width: 60px; }
.w-l { width: 76px; }
.w-p { width: 13px; }
.grid th { padding: 0; border-right: 1px solid #c6c6c6; background: #e6e6e6; color: #333; font: 9px/11px "Open Sans", "Noto Sans", sans-serif; }
.grid thead th { height: 13px; border-bottom: 1px solid #9d9d9d; line-height: 12px; }
.grid thead .sel { background: #d3d3d3; border-bottom-color: #217346; color: #217346; }
.corner svg { margin-left: auto; }
.grid tbody th { border-bottom: 1px solid #c6c6c6; }
.grid td { padding: 1px 1px 0 2px; border-right: 1px solid #dcdcdc; border-bottom: 1px solid #dcdcdc; text-align: right; white-space: nowrap; }
.grid tbody tr { height: 13px; line-height: 11px; vertical-align: bottom; }
.grid tbody .tall { height: 21px; }
.grid tbody .short { height: 12px; line-height: 10px; }
.grid .t { text-align: left; }
.grid .h { text-align: center; font-style: italic; }
.grid .ruled,
.grid .rule-e td:nth-child(n+5):nth-child(-n+6),
.grid .rule-i td:nth-child(n+5):nth-child(-n+10),
.grid .rule-l td:nth-child(n+5):nth-child(-n+13) { border-bottom-color: #000; }

.chart { position: absolute; left: 137px; top: 285px; width: 483px; height: 150px; margin: 0; border-top: 1px solid #d9d9d9; background: #fff; }
.chart figcaption { padding: 8px 0; text-align: center; font: 11px/12px Lato, sans-serif; color: #595959; }
.axis text { font: 7px Lato, sans-serif; fill: #595959; text-anchor: end; }

.vscroll { flex: none; display: flex; flex-direction: column; width: 13px; padding: 1px 2px 0 2px; background: #d9d9d9; }
.vscroll button, .hscroll button { flex: none; width: 9px; height: 11px; border: 1px solid #ababab; background: #fff; color: #666; }
.vscroll .thumb { flex: 0 1 266px; border: 1px solid #ababab; background: #fff; }
.vscroll .down { margin-top: auto; }

/* Sheet tabs and horizontal scroll */
.sheetbar { flex: none; display: flex; align-items: center; height: 16px; padding-right: 13px; background: #e6e6e6; }
.sheetnav { display: flex; align-items: center; width: 55px; padding-left: 14px; gap: 11px; color: #217346; }
.sheetnav .more { font-weight: 700; }
.sheettab { align-self: flex-start; height: 14px; padding: 0 5px; border-bottom: 1px solid #217346; background: #fff; color: #217346; font-size: 9px; font-weight: 600; }
.add { margin-left: 17px; }
.sheetbar > .grip { margin-left: auto; }
.hscroll { flex: 0 1 390px; display: flex; margin-left: 8px; background: #d9d9d9; }
.hscroll button { width: 11px; height: 11px; }
.hscroll .thumb { flex: 0 1 344px; border: 1px solid #ababab; border-left: 0; background: #fff; }
.hscroll .right { margin-left: auto; }

/* Status bar */
.status { flex: none; display: flex; align-items: center; height: 14px; padding: 0 5px; background: #f3f2f1; font-size: 7px; }
.ready { margin-right: auto; }
.view { width: 27px; height: 14px; }
.on { background: #c8c6c4; }
.zoombtn { width: 8px; }
.zoom { appearance: none; width: 67px; height: 9px; margin: 0 1px 0 3px; background: linear-gradient(#a5a5a5, #a5a5a5) center / 100% 1px no-repeat; }
.zoom::-webkit-slider-thumb { appearance: none; width: 3px; height: 7px; background: #666; }
.percent { width: 25px; text-align: right; }

/* Windows taskbar */
.taskbar { flex: none; display: flex; height: 27px; background: linear-gradient(90deg, #24333b, #3a474c 28%, #2b3642 45%, #232631 65%, #211f29 80%, #1e1b22); color: #fff; }
.start { width: 32px; }
.winsearch { flex: 0 1 229px; display: flex; align-items: center; gap: 7px; padding-left: 8px; border: 1px solid #d5d5d5; background: #f2f2f2; color: #333; font-size: 10px; }
.winsearch input { flex: 1; }
.winsearch input::placeholder { color: #333; opacity: 1; }
.apps { display: flex; }
.apps button { width: 33px; }
.run { background: linear-gradient(#76b9ed, #76b9ed) center bottom / 27px 2px no-repeat; }
.current { background-color: #4d505d; background-size: 33px 2px; }
.logo { font-family: "Open Sans", sans-serif; font-weight: 700; text-anchor: middle; }
.badged { position: relative; }
.count { position: absolute; left: 14px; top: 13px; padding: 0 2px; border: 1px solid #6a7078; border-radius: 6px; background: #353c43; font-size: 7px; font-weight: 600; line-height: 9px; }
.tray { display: flex; align-items: stretch; margin-left: auto; }
.tray button { width: 21px; }
.tray .pen { width: 25px; }
.clock { width: 48px; padding-top: 1px; line-height: 12px; text-align: center; }
.tray .badged { width: 34px; padding-right: 8px; }
.tray .count { left: 11px; }
```
